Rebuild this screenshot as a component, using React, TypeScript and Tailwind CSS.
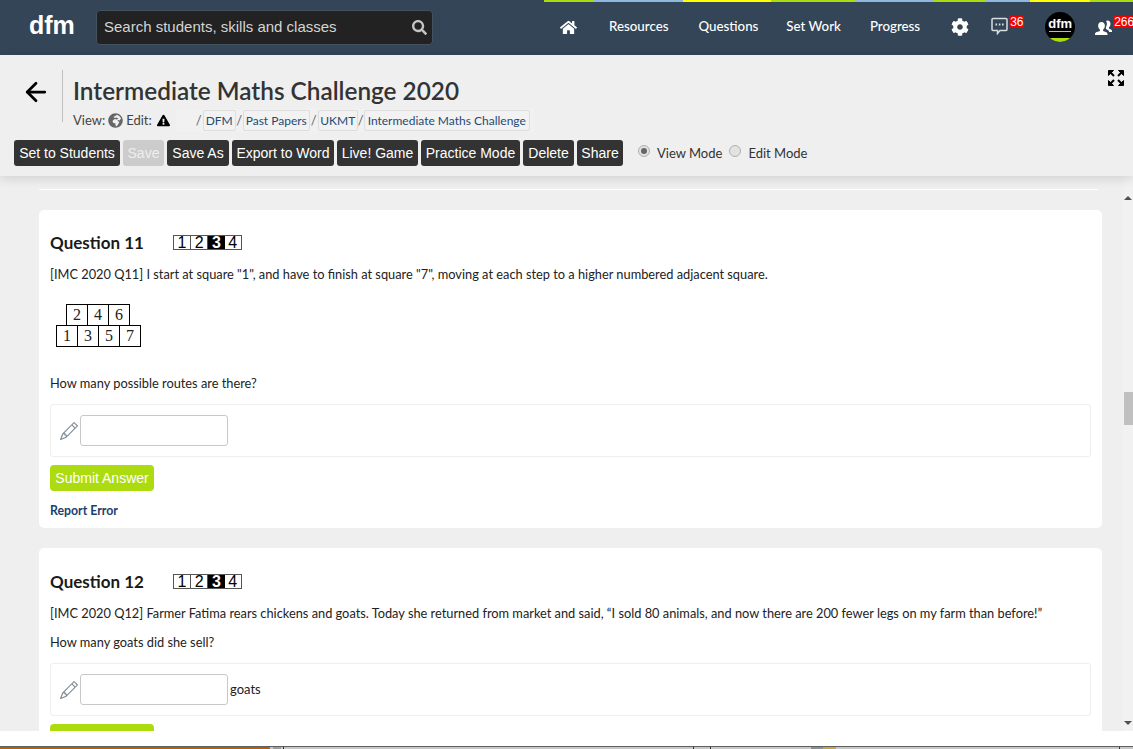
import { ArrowLeft } from 'lucide-react'
import { BsPencil } from 'react-icons/bs'
import {
  FaCog,
  FaExclamationTriangle,
  FaGlobeAfrica,
  FaHome,
  FaSearch,
} from 'react-icons/fa'

const lato = "font-['Lato','Noto_Sans',sans-serif]"
const arial = "font-['Liberation_Sans',Arial,sans-serif]"

const stripes = [
  { w: 'w-[50px]', bg: 'bg-[#acdc0f]' },
  { w: 'w-[89px]', bg: 'bg-[#8fb8de]' },
  { w: 'w-[88px]', bg: 'bg-[#ffff00]' },
  { w: 'w-[84px]', bg: 'bg-[#acdc0f]' },
  { w: 'w-[79px]', bg: 'bg-[#8fb8de]' },
  { w: 'w-[51px]', bg: 'bg-[#acdc0f]' },
  { w: 'w-[45px]', bg: 'bg-[#8fb8de]' },
  { w: 'w-[60px]', bg: 'bg-[#ffff00]' },
  { w: 'flex-1', bg: 'bg-[#acdc0f]' },
]

const actions = [
  { label: 'Set to Students', w: 'w-[106px]' },
  { label: 'Save', w: 'w-[41px]', disabled: true },
  { label: 'Save As', w: 'w-[62px]' },
  { label: 'Export to Word', w: 'w-[102px]' },
  { label: 'Live! Game', w: 'w-[81px]' },
  { label: 'Practice Mode', w: 'w-[99px]' },
  { label: 'Delete', w: 'w-[51px]' },
  { label: 'Share', w: 'w-[46px]' },
]

function NavBar() {
  return (
    <header className={`h-[55px] shrink-0 bg-[#334556] text-white ${lato}`}>
      <div className="ml-[544px] flex h-[2px]">
        {stripes.map((s, i) => (
          <div key={i} className={`${s.w} ${s.bg}`} />
        ))}
      </div>
      <div className="flex h-[53px] items-start pl-[29px]">
        <span className={`mt-[5px] w-[67px] text-[25px] leading-[36px] font-bold ${arial}`}>dfm</span>
        <div className="mt-[8px] flex h-[35px] w-[337px] items-center justify-between rounded-[4px] border border-[#43525f] bg-[#222222] pr-[5px] pl-[7px]">
          <span className={`text-[15px] text-[#d5d5d5] ${arial}`}>Search students, skills and classes</span>
          <FaSearch className="text-[15px] text-[#c4c4c4]" />
        </div>
        <FaHome className="mt-[17px] ml-[127px] text-[17px]" />
        <span className="mt-[14px] ml-[32px] text-[13.3px] leading-[20px] font-medium">Resources</span>
        <span className="mt-[14px] ml-[30px] text-[13.3px] leading-[20px] font-medium">Questions</span>
        <span className="mt-[14px] ml-[28px] text-[13.3px] leading-[20px] font-medium">Set Work</span>
        <span className="mt-[14px] ml-[29px] text-[13.3px] leading-[20px] font-medium">Progress</span>
        <FaCog className="mt-[16px] ml-[31px] text-[18px]" />
        <div className="relative mt-[15px] ml-[22px] h-[18px]">
          <svg width="17" height="18" viewBox="0 0 17 18" fill="none" stroke="#d8dde1" strokeWidth="1.5">
            <path d="M2 1.5h13a1 1 0 0 1 1 1v10a1 1 0 0 1-1 1H9l-2.5 3v-3H2a1 1 0 0 1-1-1v-10a1 1 0 0 1 1-1z" />
            <path d="M4.5 7.5h1.6M7.8 7.5h1.6M11 7.5h1.6" strokeWidth="2" />
          </svg>
          <span className={`absolute top-[-1px] left-[18px] bg-[#f00000] px-px text-[12px] leading-[12px] text-white ${arial}`}>36</span>
        </div>
        <div className="mt-[10px] ml-[37px] flex h-[30px] w-[30px] flex-col items-center overflow-hidden rounded-full bg-black">
          <span className={`mt-[5px] text-[13px] leading-[13px] font-bold ${arial}`}>dfm</span>
          <div className="mt-[1px] h-px w-[22px] bg-[#bbbbbb]" />
          <div className="mt-auto h-[4px] w-full bg-[#acdc0f]" />
        </div>
        <div className="relative mt-[15px] ml-[20px] h-[18px]">
          <svg width="17" height="16" viewBox="0 0 17 16" fill="white" className="mt-[3px]">
            <path d="M12.5 0.5c1.8 0 3 1.4 3 3.2 0 1.5-.7 3-1.6 3.7v1c1.2.5 3.1 1 3.1 2.6v1h-2.7c-.4-1.7-2-2.4-3.4-3v-2c.7-.9 1-2.2 1-3.4 0-1-.3-2-.8-2.7.6-.3 1.5-.4 2.4-.4z" />
            <path d="M6.5 2c2 0 3.4 1.6 3.4 3.6 0 1.7-.8 3.3-1.8 4.1v1.2c1.5.6 4.4 1 4.4 3.1v1H0v-1c0-2.1 3.4-2.5 4.9-3.1V9.7c-1-.8-1.8-2.4-1.8-4.1C3.1 3.6 4.5 2 6.5 2z" />
          </svg>
          <span className={`absolute top-[-1px] left-[18px] bg-[#f00000] px-px text-[12px] leading-[12px] text-white ${arial}`}>266</span>
        </div>
      </div>
    </header>
  )
}

function FullscreenIcon() {
  return (
    <svg width="16" height="16" viewBox="0 0 16 16" fill="black" stroke="black">
      <path d="M0.5 0.5h5l-5 5z" />
      <path d="M15.5 0.5v5l-5-5z" />
      <path d="M0.5 15.5v-5l5 5z" />
      <path d="M15.5 15.5h-5l5-5z" />
      <path d="M3 3l3 3M13 3l-3 3M3 13l3-3M13 13l-3-3" strokeWidth="2" />
    </svg>
  )
}

function Crumb({ label, w }: { label: string; w: string }) {
  return (
    <span className={`${w} flex h-[21px] items-center justify-center rounded-[2px] border border-[#dddddd] bg-[#f2f2f2] text-[12px] text-[#1f4a75]`}>
      {label}
    </span>
  )
}

function Radio({ checked }: { checked?: boolean }) {
  return (
    <span className="flex h-[12px] w-[12px] items-center justify-center rounded-full border border-[#b0b0b0] bg-[#e2e2e2]">
      {checked && <span className="h-[6px] w-[6px] rounded-full bg-[#666666]" />}
    </span>
  )
}

function TitleBar() {
  return (
    <section className={`relative z-10 h-[121px] shrink-0 bg-[#efefef] shadow-[0_3px_10px_rgba(0,0,0,0.12)] ${lato}`}>
      <div className="flex h-[85px] items-start">
        <ArrowLeft className="mt-[22px] ml-[21px] text-black" size={30} strokeWidth={2.2} />
        <div className="mt-[15px] ml-[11px] h-[52px] w-px bg-[#c0c0c0]" />
        <div className="ml-[10px] flex-1">
          <h1 className="mt-[18px] text-[24.35px] leading-[36px] font-semibold text-[#333333]">Intermediate Maths Challenge 2020</h1>
          <div className="mt-[1px] flex h-[21px] items-center text-[13px] text-[#444444]">
            <span>View:</span>
            <FaGlobeAfrica className="mx-[3px] text-[15px] text-[#666666]" />
            <span>Edit:</span>
            <FaExclamationTriangle className="ml-[5px] text-[13px] text-black" />
            <div className="ml-[6px] flex items-center bg-[#f1f1f1] py-px pr-[4px] pl-[20px] text-[13px] text-[#666666]">
              <span className="w-[7px]">/</span>
              <Crumb label="DFM" w="w-[33px]" />
              <span className="w-[7px] text-center">/</span>
              <Crumb label="Past Papers" w="w-[67px]" />
              <span className="w-[8px] text-center">/</span>
              <Crumb label="UKMT" w="w-[40px]" />
              <span className="w-[6px] text-center">/</span>
              <Crumb label="Intermediate Maths Challenge" w="w-[166px]" />
            </div>
          </div>
        </div>
        <div className="mt-[15px] mr-[9px]">
          <FullscreenIcon />
        </div>
      </div>
      <div className="flex items-center pl-[14px]">
        <div className="flex gap-[3px]">
          {actions.map((a) => (
            <button
              key={a.label}
              className={`${a.w} h-[26px] rounded-[3px] text-center text-[14px] ${arial} ${a.disabled ? 'bg-[#cccccc] text-[#eeeeee]' : 'bg-[#333333] text-white'}`}
            >
              {a.label}
            </button>
          ))}
        </div>
        <div className="mb-[4px] ml-[15px]">
          <Radio checked />
        </div>
        <span className="mt-[2px] ml-[7px] text-[13px] text-[#333333]">View Mode</span>
        <div className="mb-[4px] ml-[7px]">
          <Radio />
        </div>
        <span className="mt-[2px] ml-[7px] text-[13px] text-[#333333]">Edit Mode</span>
      </div>
    </section>
  )
}

function Difficulty() {
  return (
    <div className={`-mt-px ml-[29px] flex h-[15px] w-[69px] border border-[#555555] text-[16px] leading-[14px] text-black ${arial}`}>
      <span className="flex-1 border-r border-[#555555] text-center">1</span>
      <span className="flex-1 border-r border-[#555555] text-center">2</span>
      <span className="flex-1 bg-black text-center font-bold text-white">3</span>
      <span className="flex-1 text-center">4</span>
    </div>
  )
}

function DiagramRow({ cells, className }: { cells: number[]; className: string }) {
  return (
    <div className={`flex ${className}`}>
      {cells.map((n) => (
        <span
          key={n}
          className="-ml-px flex h-[22px] w-[22px] items-center justify-center border border-black bg-white font-['Liberation_Serif',serif] text-[16px] text-[#222222]"
        >
          {n}
        </span>
      ))}
    </div>
  )
}

function AnswerBox({ unit }: { unit?: string }) {
  return (
    <div className="mt-[12px] flex h-[53px] items-center rounded-[3px] border border-[#eeeeee] pl-[9px]">
      <BsPencil className="text-[18px] text-[#7c8a93]" />
      <div className="ml-[2px] h-[31px] w-[148px] rounded-[3px] border border-[#c8c8c8] bg-white" />
      {unit && <span className="ml-[2px] text-[13px] text-[#222222]">{unit}</span>}
    </div>
  )
}

function SubmitButton() {
  return (
    <button className={`mt-[8px] block h-[26px] w-[104px] rounded-[4px] bg-[#acdc0f] text-center text-[14px] text-white ${arial}`}>
      Submit Answer
    </button>
  )
}

function QuestionHead({ n, className }: { n: number; className: string }) {
  return (
    <div className={`flex items-center ${className}`}>
      <h2 className="text-[17px] leading-[18px] font-bold text-[#1a1a1a]">Question {n}</h2>
      <Difficulty />
    </div>
  )
}

function Scrollbar() {
  return (
    <aside className="flex w-[10px] shrink-0 flex-col bg-[#f1f1f1]">
      <div className="mx-auto mt-[20px] h-0 w-0 border-x-[4px] border-b-[4px] border-x-transparent border-b-[#505050]" />
      <div className="mt-[192px] ml-px h-[33px] bg-[#c0c0c0]" />
      <div className="mx-auto mt-auto mb-[6px] h-0 w-0 border-x-[4px] border-t-[4px] border-x-transparent border-t-[#505050]" />
    </aside>
  )
}

export default function App() {
  return (
    <div className={`flex h-[749px] w-[1133px] flex-col overflow-hidden bg-white ${lato}`}>
      <NavBar />
      <TitleBar />
      <main className="flex h-[555px] shrink-0 bg-[#efefef]">
        <div className="flex-1 overflow-hidden pr-[21px] pl-[39px]">
          <div className="mt-[13px] mr-[4px] h-px bg-white" />
          <article className="mt-[20px] h-[318px] rounded-[5px] bg-white px-[11px] text-[12.8px] text-[#222222]">
            <QuestionHead n={11} className="pt-[24px]" />
            <p className="mt-[13px] leading-[18px]">
              [IMC 2020 Q11] I start at square "1", and have to finish at square "7", moving at each step to a higher numbered adjacent square.
            </p>
            <div className="mt-[21px]">
              <DiagramRow cells={[2, 4, 6]} className="ml-[17px]" />
              <DiagramRow cells={[1, 3, 5, 7]} className="-mt-px ml-[7px]" />
            </div>
            <p className="mt-[27px] leading-[18px]">How many possible routes are there?</p>
            <AnswerBox />
            <SubmitButton />
            <a className="mt-[12px] block text-[12.3px] leading-[16px] font-bold text-[#1a4070]">Report Error</a>
          </article>
          <article className="mt-[20px] h-[300px] rounded-[5px] bg-white px-[11px] text-[12.8px] text-[#222222]">
            <QuestionHead n={12} className="pt-[25px]" />
            <p className="mt-[13px] leading-[18px]">
              [IMC 2020 Q12] Farmer Fatima rears chickens and goats. Today she returned from market and said, “I sold 80 animals, and now there are 200 fewer legs on my farm than before!”
            </p>
            <p className="mt-[11px] leading-[18px]">How many goats did she sell?</p>
            <AnswerBox unit="goats" />
            <SubmitButton />
          </article>
        </div>
        <Scrollbar />
      </main>
      <div className="h-[15px] shrink-0 bg-white" />
      <footer className="flex h-[3px] shrink-0 border-t border-[#5f5f5f] bg-[#c8c8c8]">
        <div className="w-[270px] bg-[#b85f00]" />
        <div className="ml-[3px] w-[8px] bg-[#9d9d9d]" />
        <div className="ml-[2px] w-px bg-[#222255]" />
        <div className="ml-[409px] w-px bg-[#333333]" />
        <div className="ml-[16px] w-px bg-[#333333]" />
        <div className="ml-[100px] w-[12px] bg-[#8f8f8f]" />
        <div className="w-[13px] bg-[#c9a838]" />
        <div className="ml-[283px] w-px bg-[#333333]" />
      </footer>
    </div>
  )
}
